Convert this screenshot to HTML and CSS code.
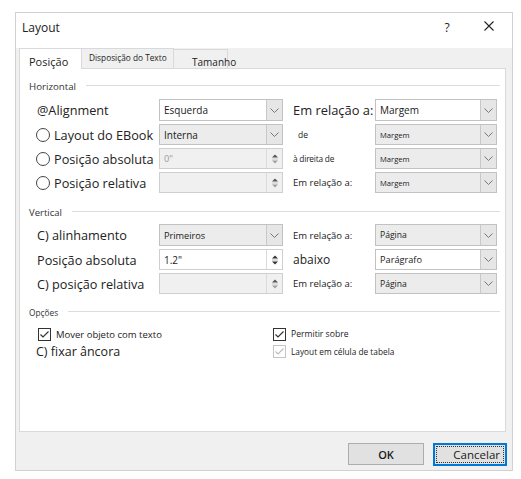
FILE: index.html
```html
<!DOCTYPE html>
<html lang="pt">
<head>
<meta charset="utf-8">
<title>Layout</title>
<link rel="stylesheet" href="styles.css">
</head>
<body>
<div class="dialog">
  <div class="titlebar">
    <span class="title">Layout</span>
    <span class="help">?</span>
    <svg class="close" width="10" height="10" viewBox="0 0 10 10"><path d="M0.5 0.5 L9.5 9.5 M9.5 0.5 L0.5 9.5" stroke="#222" stroke-width="1.1" fill="none"/></svg>
  </div>
  <div class="tabs">
    <div class="tab active t-pos">Posição</div>
    <div class="tab t-disp">Disposição do Texto</div>
    <div class="tab t-tam">Tamanho</div>
  </div>
  <div class="panel">
    <div class="group-head"><span class="gh-text gh-h">Horizontal</span><span class="gh-line"></span></div>
    <div class="grid grid-h">
      <div class="lbl big">@Alignment</div>
      <div class="combo white"><span class="val v10">Esquerda</span><span class="btn"><svg width="9" height="5" viewBox="0 0 9 5"><path d="M0.5 0.5 L4.5 4.5 L8.5 0.5" stroke="#777" fill="none"/></svg></span></div>
      <div class="rlbl big">Em relação a:</div>
      <div class="combo white"><span class="val v10">Margem</span><span class="btn"><svg width="9" height="5" viewBox="0 0 9 5"><path d="M0.5 0.5 L4.5 4.5 L8.5 0.5" stroke="#777" fill="none"/></svg></span></div>

      <div class="lbl big"><span class="radio"></span>Layout do EBook</div>
      <div class="combo"><span class="val v10">Interna</span><span class="btn"><svg width="9" height="5" viewBox="0 0 9 5"><path d="M0.5 0.5 L4.5 4.5 L8.5 0.5" stroke="#777" fill="none"/></svg></span></div>
      <div class="rlbl sm de">de</div>
      <div class="combo"><span class="val v8">Margem</span><span class="btn"><svg width="9" height="5" viewBox="0 0 9 5"><path d="M0.5 0.5 L4.5 4.5 L8.5 0.5" stroke="#777" fill="none"/></svg></span></div>

      <div class="lbl big"><span class="radio"></span>Posição absoluta</div>
      <div class="spin"><span class="val v9 dim">0"</span><span class="arrows"><svg width="8" height="14" viewBox="0 0 8 14"><path d="M4 2.5 L7 5.5 L1 5.5 Z" fill="#555"/><path d="M1 7 L7 7" stroke="#ccc"/><path d="M1 8.5 L7 8.5 L4 11.5 Z" fill="#a0a0a0"/></svg></span></div>
      <div class="rlbl xs">à direita de</div>
      <div class="combo"><span class="val v8">Margem</span><span class="btn"><svg width="9" height="5" viewBox="0 0 9 5"><path d="M0.5 0.5 L4.5 4.5 L8.5 0.5" stroke="#777" fill="none"/></svg></span></div>

      <div class="lbl big"><span class="radio"></span>Posição relativa</div>
      <div class="spin"><span class="val"></span><span class="arrows"><svg width="8" height="14" viewBox="0 0 8 14"><path d="M4 2.5 L7 5.5 L1 5.5 Z" fill="#555"/><path d="M1 7 L7 7" stroke="#ccc"/><path d="M1 8.5 L7 8.5 L4 11.5 Z" fill="#a0a0a0"/></svg></span></div>
      <div class="rlbl sm">Em relação a:</div>
      <div class="combo"><span class="val v8">Margem</span><span class="btn"><svg width="9" height="5" viewBox="0 0 9 5"><path d="M0.5 0.5 L4.5 4.5 L8.5 0.5" stroke="#777" fill="none"/></svg></span></div>
    </div>

    <div class="group-head gv"><span class="gh-text gh-v">Vertical</span><span class="gh-line"></span></div>
    <div class="grid grid-v">
      <div class="lbl big">C) alinhamento</div>
      <div class="combo"><span class="val v9">Primeiros</span><span class="btn"><svg width="9" height="5" viewBox="0 0 9 5"><path d="M0.5 0.5 L4.5 4.5 L8.5 0.5" stroke="#777" fill="none"/></svg></span></div>
      <div class="rlbl sm">Em relação a:</div>
      <div class="combo"><span class="val v85">Página</span><span class="btn"><svg width="9" height="5" viewBox="0 0 9 5"><path d="M0.5 0.5 L4.5 4.5 L8.5 0.5" stroke="#777" fill="none"/></svg></span></div>

      <div class="lbl big">Posição absoluta</div>
      <div class="spin white"><span class="val v10">1.2"</span><span class="arrows"><svg width="8" height="14" viewBox="0 0 8 14"><path d="M4 2.5 L7 5.5 L1 5.5 Z" fill="#333"/><path d="M1 7 L7 7" stroke="#bbb"/><path d="M1 8.5 L7 8.5 L4 11.5 Z" fill="#333"/></svg></span></div>
      <div class="rlbl big2">abaixo</div>
      <div class="combo white"><span class="val v9">Parágrafo</span><span class="btn"><svg width="9" height="5" viewBox="0 0 9 5"><path d="M0.5 0.5 L4.5 4.5 L8.5 0.5" stroke="#777" fill="none"/></svg></span></div>

      <div class="lbl big">C) posição relativa</div>
      <div class="spin"><span class="val"></span><span class="arrows"><svg width="8" height="14" viewBox="0 0 8 14"><path d="M4 2.5 L7 5.5 L1 5.5 Z" fill="#555"/><path d="M1 7 L7 7" stroke="#ccc"/><path d="M1 8.5 L7 8.5 L4 11.5 Z" fill="#a0a0a0"/></svg></span></div>
      <div class="rlbl sm">Em relação a:</div>
      <div class="combo"><span class="val v85">Página</span><span class="btn"><svg width="9" height="5" viewBox="0 0 9 5"><path d="M0.5 0.5 L4.5 4.5 L8.5 0.5" stroke="#777" fill="none"/></svg></span></div>
    </div>

    <div class="group-head go"><span class="gh-text gh-o">Opções</span><span class="gh-line"></span></div>
    <div class="opts">
      <div class="opt"><svg class="cb" width="13" height="13" viewBox="0 0 13 13"><rect x="0.5" y="0.5" width="12" height="12" fill="#fff" stroke="#333"/><path d="M2.5 6.5 L5 9 L10.5 3.5" stroke="#333" stroke-width="1.2" fill="none"/></svg><span class="otext o95">Mover objeto com texto</span></div>
      <div class="opt"><svg class="cb" width="13" height="13" viewBox="0 0 13 13"><rect x="0.5" y="0.5" width="12" height="12" fill="#fff" stroke="#333"/><path d="M2.5 6.5 L5 9 L10.5 3.5" stroke="#333" stroke-width="1.2" fill="none"/></svg><span class="otext o85">Permitir sobre</span></div>
      <div class="opt anchor">C) fixar âncora</div>
      <div class="opt"><svg class="cb" width="13" height="13" viewBox="0 0 13 13"><rect x="0.5" y="0.5" width="12" height="12" fill="#fff" stroke="#c4c4c4"/><path d="M2.5 6.5 L5 9 L10.5 3.5" stroke="#bdbdbd" stroke-width="1.2" fill="none"/></svg><span class="otext o8">Layout em célula de tabela</span></div>
    </div>
  </div>
  <div class="buttons">
    <button class="b-ok">OK</button>
    <button class="b-cancel"><span class="focus">Cancelar</span></button>
  </div>
</div>
</body>
</html>
```

FILE: styles.css
```css
* { box-sizing: border-box; }

body {
  margin: 0;
  background: #fff;
  font-family: "Open Sans", "Noto Sans", sans-serif;
  color: #222;
}

.dialog {
  margin: 12px 0 0 15px;
  width: 498px;
  height: 459px;
  border: 1px solid #d2d2d2;
  background: #f0f0f0;
  display: flex;
  flex-direction: column;
}

.titlebar {
  height: 35px;
  background: #fff;
  display: flex;
  align-items: flex-start;
  padding: 7px 0 0 6px;
}

.title {
  flex: 1;
  font-size: 12px;
  line-height: 16px;
}

.help {
  width: 8px;
  text-align: center;
  font-size: 12px;
  line-height: 14px;
  margin: 1px 33px 0 0;
}

.close {
  margin: 1px 18px 0 0;
}

.tabs {
  display: flex;
  align-items: flex-end;
  height: 20px;
  margin-left: 3px;
  position: relative;
  z-index: 1;
}

.tab {
  height: 20px;
  border: 1px solid #d9d9d9;
  border-bottom: none;
  white-space: nowrap;
  background: #f0f0f0;
}

.tab + .tab { margin-left: -1px; }

.tab.active {
  height: 21px;
  margin-bottom: -1px;
  background: #fff;
  position: relative;
  z-index: 2;
}

.t-pos {
  width: 63px;
  padding: 6px 0 0 9px;
  font-size: 11px;
  line-height: 14px;
}

.t-disp {
  width: 93px;
  padding: 3px 0 0 7px;
  font-size: 8.3px;
  line-height: 12px;
}

.t-tam {
  width: 55px;
  height: 19px;
  padding: 6px 0 0 18px;
  font-size: 10px;
  line-height: 12px;
  overflow: visible;
}

.panel {
  margin-left: 3px;
  width: 487px;
  height: 364px;
  border: 1px solid #d9d9d9;
  background: #fff;
  padding: 11px 5px 0 9px;
}

.group-head {
  display: flex;
  align-items: center;
  height: 14px;
}

.gh-text { color: #333; line-height: 14px; }
.gh-h { font-size: 9.7px; }
.gh-v { font-size: 9.5px; }
.gh-o { font-size: 8.3px; }

.gh-line {
  flex: 1;
  height: 1px;
  background: #dcdcdc;
  margin: -3px 0 0 10px;
}

.gv { margin-top: 13px; }
.go { margin-top: 12px; }

.grid {
  display: grid;
  grid-template-columns: 122px 124px 92px 122px;
  margin-left: 8px;
}

.grid-h {
  margin-top: 5px;
  grid-template-rows: 22px 21px 21px 21px;
  row-gap: 3px;
}

.grid-v {
  margin-top: 4px;
  grid-template-rows: 22px 21px 21px;
  row-gap: 3px;
}

.lbl {
  display: flex;
  align-items: center;
  white-space: nowrap;
}

.big { font-size: 12.7px; }

.radio {
  width: 14px;
  height: 14px;
  border: 1px solid #444;
  border-radius: 50%;
  background: #fff;
  margin: 0 4px 0 -1px;
  flex: none;
}

.rlbl {
  display: flex;
  align-items: center;
  padding-left: 10px;
  white-space: nowrap;
}

.rlbl.big { font-size: 12.9px; }
.rlbl.big2 { font-size: 12px; }
.rlbl.sm { font-size: 9.5px; }
.rlbl.xs { font-size: 8.3px; letter-spacing: -0.2px; }
.rlbl.de { font-size: 8.5px; padding-left: 15px; }

.combo, .spin {
  display: flex;
  border: 1px solid #c2c2c2;
  background: #ececec;
}

.combo.white, .spin.white { background: #fff; }

.val {
  flex: 1;
  display: flex;
  align-items: center;
  padding-left: 4px;
  white-space: nowrap;
  color: #1a1a1a;
}

.v10 { font-size: 10px; }
.v9 { font-size: 9.2px; }
.v85 { font-size: 8.6px; }
.v8 { font-size: 7.6px; }
.dim { color: #9a9a9a; }

.btn {
  width: 16px;
  border-left: 1px solid #c8c8c8;
  background: #e6e6e6;
  display: flex;
  align-items: center;
  justify-content: center;
}

.spin { background: #f0f0f0; border-color: #cfcfcf; }

.arrows {
  width: 16px;
  display: flex;
  align-items: center;
  justify-content: center;
  border-left: 1px solid #dadada;
}

.opts {
  display: grid;
  grid-template-columns: 235px 1fr;
  grid-template-rows: 14px 14px;
  row-gap: 3px;
  margin: 7px 0 0 9px;
}

.opt {
  display: flex;
  align-items: center;
  white-space: nowrap;
}

.cb { flex: none; margin-right: 5px; }

.o95 { font-size: 9.5px; }
.o85 { font-size: 8.6px; }
.o8 { font-size: 8.3px; }

.anchor {
  font-size: 12.5px;
  margin-left: -2px;
}

.buttons {
  display: flex;
  justify-content: flex-end;
  gap: 9px;
  padding: 11px 5px 0 0;
}

button {
  font-family: "Open Sans", "Noto Sans", sans-serif;
  background: #e1e1e1;
  color: #1a1a1a;
  padding: 0;
  margin: 0;
}

.b-ok {
  width: 76px;
  height: 22px;
  border: 1px solid #adadad;
  font-size: 11px;
  font-weight: 600;
}

.b-cancel {
  width: 74px;
  height: 23px;
  border: 2px solid #0078d7;
  padding: 1px;
}

.focus {
  display: flex;
  align-items: center;
  justify-content: flex-end;
  height: 100%;
  padding-right: 3px;
  border: 1px dotted #333;
  font-size: 11.5px;
}
```
